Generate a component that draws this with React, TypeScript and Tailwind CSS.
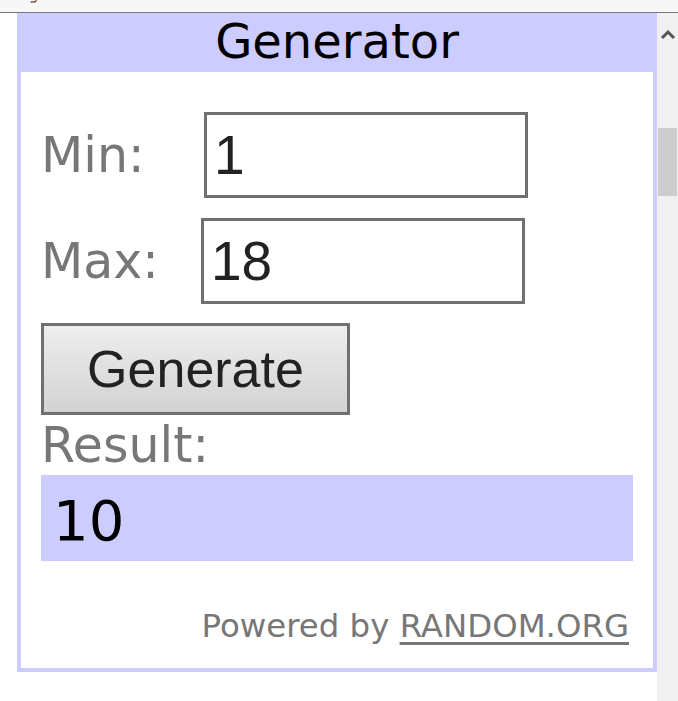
import React from "react";

type FieldRow = {
  label: string,
  value: string,
  labelWidth: string
}

const Field = ({ label, value, labelWidth }: FieldRow) => (
  <div className="flex items-center">
    <span className={labelWidth + " text-[49px] leading-none text-[#777777] mt-[1px]"}>
      {label}
    </span>
    <input
      readOnly
      type="text"
      value={value}
      className="[font-family:'Liberation_Sans',Arial,sans-serif] w-[324px] h-[86px] border-[3px] border-[#707070] bg-white px-[7px] text-[55px] text-[#222222] outline-none"
    />
  </div>
);

const Scrollbar = () => (
  <div className="w-[21px] bg-[#f0f0f0] flex flex-col items-center pt-[16px]">
    <svg width="16" height="11" viewBox="0 0 16 11">
      <polyline points="2,9 8,3 14,9" fill="none" stroke="#555555" strokeWidth="3" />
    </svg>
    <div className="mt-[88px] w-[19px] h-[68px] bg-[#cdcdcd]" />
  </div>
);

export default function App() {
  return (
    <div className="w-[678px] h-[701px] flex flex-col bg-white overflow-hidden [font-family:'DejaVu_Sans',Verdana,sans-serif]">
      <div className="h-[13px] shrink-0 bg-[#f7f7f7] border-b border-[#777777] pl-[30px]">
        <svg width="7" height="3" viewBox="0 0 7 3" className="block">
          <path d="M0.5 2 H4.5 Q6 2 6 0" fill="none" stroke="#222222" strokeWidth="1.2" />
          <rect x="5" y="0" width="1.5" height="1" fill="#e08a2a" />
        </svg>
      </div>

      <div className="flex flex-1">
        <div className="flex-1 pl-[17px]">
          <div className="w-[640px] border-4 border-[#ccccff] bg-white">
            <div className="h-[55px] bg-[#ccccff] text-center text-[48px] leading-[49px] text-black">
              Generator
            </div>

            <div className="px-[20px] pt-[40px] pb-[26px] flex flex-col">
              <Field label="Min:" value="1" labelWidth="w-[163px]" />
              <div className="mt-[20px]">
                <Field label="Max:" value="18" labelWidth="w-[160px]" />
              </div>

              <button
                type="button"
                className="[font-family:'Liberation_Sans',Arial,sans-serif] mt-[19px] w-[309px] h-[92px] border-[3px] border-[#707070] bg-linear-to-b from-[#eeeeee] to-[#d2d2d2] text-[52px] leading-none text-[#222222]"
              >
                Generate
              </button>

              <div className="mt-[6px] text-[49px] leading-none text-[#777777]">
                Result:
              </div>

              <div className="mt-[5px] h-[86px] bg-[#ccccff] flex items-center pl-[12px] pt-[5px] text-[56px] leading-none text-black">
                10
              </div>

              <div className="mt-[49px] pr-[4px] text-right text-[32.4px] leading-none text-[#777777]">
                Powered by{" "}
                <a className="underline decoration-[3px] underline-offset-[5px] text-[#777777]">RANDOM.ORG</a>
              </div>
            </div>
          </div>
        </div>
        <Scrollbar />
      </div>
    </div>
  );
}
